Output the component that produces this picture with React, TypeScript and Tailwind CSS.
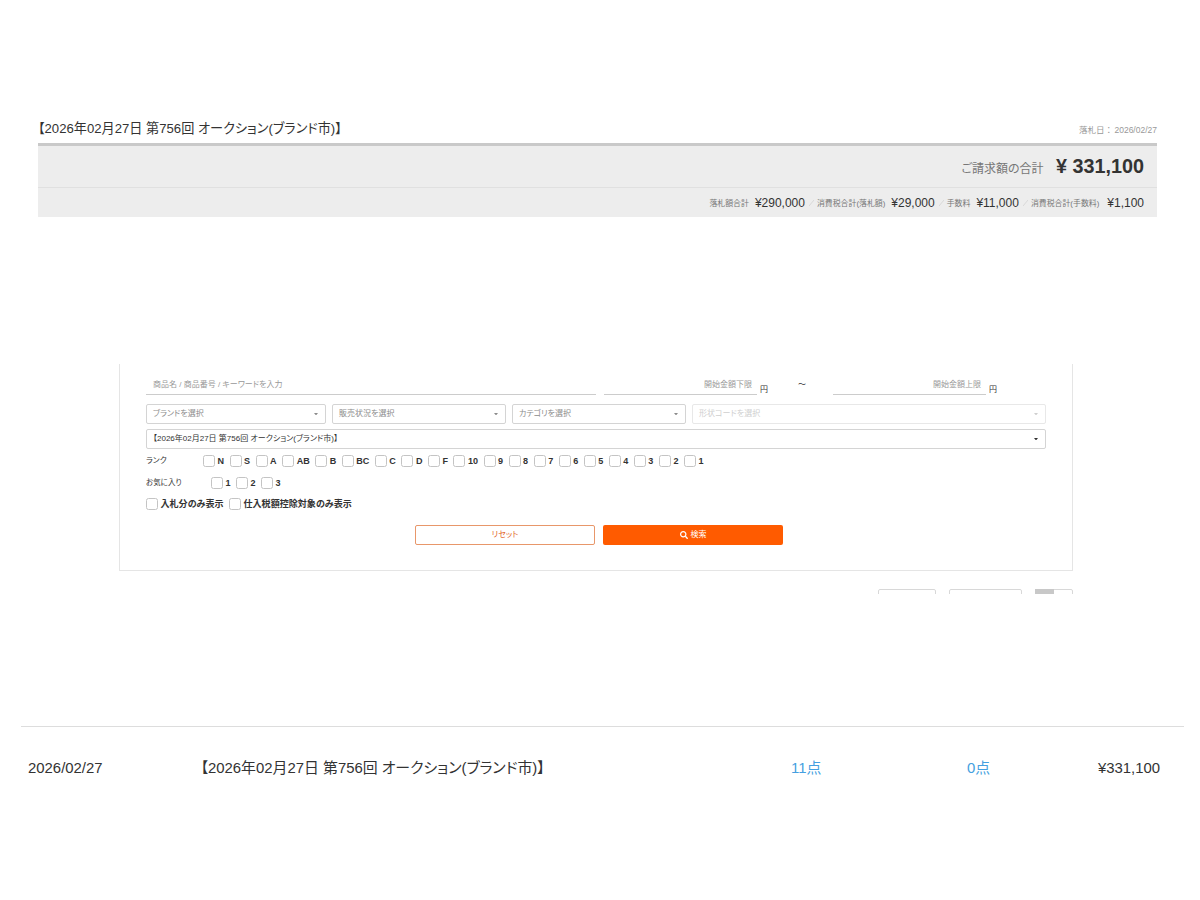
import React from "react";
import { FaSearch } from "react-icons/fa";

const RANKS = ["N", "S", "A", "AB", "B", "BC", "C", "D", "F", "10", "9", "8", "7", "6", "5", "4", "3", "2", "1"];
const FAVORITES = ["1", "2", "3"];
const AUCTION = "【2026年02月27日 第756回 オークション(ブランド市)】";

const COSTS = [
  { label: "落札額合計", value: "¥290,000" },
  { label: "消費税合計(落札額)", value: "¥29,000" },
  { label: "手数料", value: "¥11,000" },
  { label: "消費税合計(手数料)", value: "¥1,100" },
];

const Check: React.FC<{ label: string }> = ({ label }) => (
  <label className="flex h-3 items-center whitespace-nowrap">
    <span className="mr-[2.5px] h-3 w-3 shrink-0 rounded-[2.5px] border border-[#c4c4c4] bg-white" />
    <span className="mr-[5.5px] text-[9.05px] leading-3 font-bold">{label}</span>
  </label>
);

const Select: React.FC<{ label: string; className: string }> = ({ label, className }) => (
  <div className={`flex h-5 items-center justify-between rounded-[2px] border pl-1.5 pr-[7px] text-[8px] leading-4 ${className}`}>
    <span className="whitespace-nowrap">{label}</span>
    <svg width="4" height="2.5" viewBox="0 0 4 2.5" fill="currentColor">
      <path d="M0 0h4L2 2.5z" />
    </svg>
  </div>
);

const Summary: React.FC = () => (
  <section className="mr-[43px] ml-[38px]">
    <div className="flex h-[30px] items-start justify-between">
      <h1 className="text-[13.15px] leading-[31px]">{AUCTION}</h1>
      <p className="text-[8.5px] leading-[35px] text-[#999]">
        <span className="mr-[-1px] [font-feature-settings:normal]">落札日：</span> 2026/02/27
      </p>
    </div>
    <div className="h-[74px] border-t-3 border-[#c9c9c9] bg-[#ededed]">
      <div className="flex h-[42px] items-center justify-end border-b border-[#e0e0e0] pr-[13px]">
        <span className="mr-[12.5px] pt-1 text-[12px] text-[#777]">ご請求額の合計</span>
        <span className="pt-px text-[19.8px] font-bold">¥ 331,100</span>
      </div>
      <div className="flex h-[29px] items-center justify-end pr-[13px] text-[12px]">
        {COSTS.map((c, i) => (
          <React.Fragment key={c.label}>
            {i > 0 && (
              <svg className="mr-[3px] ml-1" width="5" height="6" viewBox="0 0 5 6" stroke="#d8d8d8">
                <path d="M0 6L5 0" />
              </svg>
            )}
            <span className={`pt-0.5 text-[7.9px] text-[#777] ${i === 3 ? "mr-2" : "mr-1.5"}`}>{c.label}</span>
            <span>{c.value}</span>
          </React.Fragment>
        ))}
      </div>
    </div>
  </section>
);

const SearchForm: React.FC = () => (
  <section className="mt-[147px] ml-[119px] h-[207px] w-[954px] border border-t-0 border-[#e5e5e5] pl-[26px] pt-2.5 text-[8px]">
    <div className="flex h-[21px]">
      <div className="w-[450px] border-b border-[#ccc] pl-[7px] leading-[21px] text-[#999]">
        商品名 / 商品番号 / キーワードを入力
      </div>
      <div className="ml-2 w-[153px] border-b border-[#ccc] pr-[5px] text-right leading-[21px] text-[#999]">開始金額下限</div>
      <span className="ml-[3px] w-[38px] leading-[32px]">円</span>
      <span className="w-[35px] leading-[21px]">～</span>
      <div className="w-[153px] border-b border-[#ccc] pr-[5px] text-right leading-[21px] text-[#999]">開始金額上限</div>
      <span className="ml-[3px] leading-[32px]">円</span>
    </div>
    <div className="mt-[9px] flex gap-1.5">
      <Select label="ブランドを選択" className="w-[180px] border-[#d4d4d4] text-[#8c8c8c]" />
      <Select label="販売状況を選択" className="w-[174px] border-[#d4d4d4] text-[#8c8c8c]" />
      <Select label="カテゴリを選択" className="w-[174px] border-[#d4d4d4] text-[#8c8c8c]" />
      <Select label="形状コードを選択" className="w-[354px] border-[#e8e8e8] text-[#cfcfcf]" />
    </div>
    <Select label={AUCTION} className="mt-[5px] w-[900px] border-[#d4d4d4] text-[#333]" />
    <div className="mt-1.5 flex h-3 items-center">
      <span className="w-[57px] text-[7.8px]">ランク</span>
      {RANKS.map((r) => (
        <Check key={r} label={r} />
      ))}
    </div>
    <div className="mt-2.5 flex h-3 items-center">
      <span className="w-[65px] text-[7.5px]">お気に入り</span>
      {FAVORITES.map((f) => (
        <Check key={f} label={f} />
      ))}
    </div>
    <div className="mt-[9px] flex">
      <Check label="入札分のみ表示" />
      <Check label="仕入税額控除対象のみ表示" />
    </div>
    <div className="mt-[15px] ml-[269px] flex gap-2">
      <button className="h-5 w-[180px] rounded-[2px] border border-[#e8976a] text-[#e2662a]">リセット</button>
      <button className="flex h-5 w-[180px] items-center justify-center gap-[3px] rounded-[2px] bg-[#ff5b00] text-white">
        <FaSearch />
        検索
      </button>
    </div>
  </section>
);

const App: React.FC = () => {
  return (
    <div className="h-[900px] w-[1200px] overflow-hidden bg-white pt-[113px] font-['Liberation_Sans','Noto_Sans_CJK_JP',sans-serif] text-[#333] [font-feature-settings:'palt']">
      <Summary />
      <SearchForm />

      {/* Toolbar, cut off below its top edge */}
      <div className="mt-[18px] flex h-[5px] justify-end overflow-hidden pr-[127px]">
        <div className="mr-[13px] h-5 w-[58px] rounded-[2px] border border-[#d8d8d8]" />
        <div className="mr-[13px] h-5 w-[73px] rounded-[2px] border border-[#d8d8d8]" />
        <div className="h-5 w-[38px] rounded-[2px] border border-[#d8d8d8]">
          <div className="-mt-px -ml-px h-5 w-[19px] bg-[#c8c8c8]" />
        </div>
      </div>

      {/* Purchase history row */}
      <div className="mt-[132px] mr-4 ml-[21px] flex border-t border-[#ddd] pt-[30px] pr-6 pl-[7px] text-[14.9px] leading-[22px]">
        <span className="w-[172.5px]">2026/02/27</span>
        <span className="w-[590.5px]">{AUCTION}</span>
        <a className="w-[176px] text-[#459fe0]">11点</a>
        <a className="text-[#459fe0]">0点</a>
        <span className="ml-auto">¥331,100</span>
      </div>
    </div>
  );
};

export default App;
